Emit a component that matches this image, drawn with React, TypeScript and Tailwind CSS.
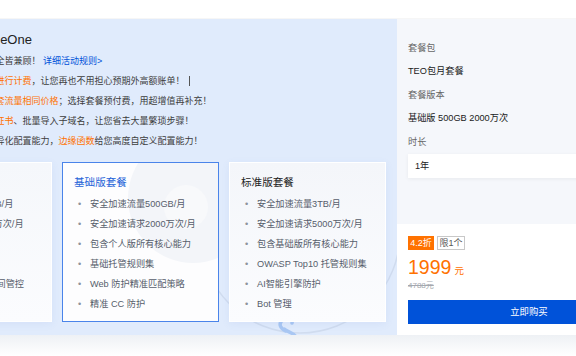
export default function App() {
  const card1 = [
    "安全加速流量50GB/月",
    "安全加速请求300万次/月",
    "包含基础安全能力",
    "免费 SSL 证书",
    "支持自定义访问时间管控",
  ];
  const card2 = [
    "安全加速流量500GB/月",
    "安全加速请求2000万次/月",
    "包含个人版所有核心能力",
    "基础托管规则集",
    "Web 防护精准匹配策略",
    "精准 CC 防护",
  ];
  const card3 = [
    "安全加速流量3TB/月",
    "安全加速请求5000万次/月",
    "包含基础版所有核心能力",
    "OWASP Top10 托管规则集",
    "AI智能引擎防护",
    "Bot 管理",
  ];

  const List = ({ items }: { items: string[] }) => (
    <ul className="mt-[5px] text-[9.2px] leading-[20px] text-[#565d6b] whitespace-nowrap">
      {items.map((t) => (
        <li key={t} className="flex">
          <span className="w-[16px] shrink-0 pl-[4px] text-[#8d929b]">•</span>
          <span>{t}</span>
        </li>
      ))}
    </ul>
  );

  return (
    <div className="w-[576px] h-[356px] overflow-hidden bg-white font-['Liberation_Sans','Noto_Sans_CJK_SC',sans-serif] text-[#333]">
      <div className="h-[19px] bg-white border-b border-[#f6f6f6]" />
      <div className="flex h-[316px]">
        {/* left promo panel */}
        <section className="relative w-[397px] shrink-0 overflow-hidden bg-[#e0ebfc]">
          <svg
            className="absolute left-[180px] top-[100px]"
            width="240"
            height="220"
            viewBox="0 0 240 220"
            fill="none"
          >
            <path d="M20 114 A100 100 0 0 0 220 114" stroke="#d0dcef" strokeWidth="1.5" />
            <path
              d="M106 212 c-6 -2 -8 -8 -3 -11 c5 -3 10 -1 9 3 M104 210 c4 3 10 4 12 8 c1 4 -4 7 -10 5"
              stroke="#a9c7f3"
              strokeWidth="3.5"
              strokeLinecap="round"
            />
          </svg>
          <div className="relative pt-[13px]">
            <h1 className="ml-[-23px] h-[16px] text-[13px] leading-[16px] text-[#222] whitespace-nowrap">
              EdgeOne
            </h1>
            <div className="mt-[3px] ml-[-4.5px] text-[9px] leading-[20px] text-[#3d3d3d] whitespace-nowrap">
              <p>
                全皆兼顾！ <a className="text-[#0052d9]">详细活动规则&gt;</a>
              </p>
              <p className="flex items-center">
                <span className="text-[#ff7200]">进行计费</span>
                <span>，让您再也不用担心预期外高额账单！</span>
                <span className="ml-[4.5px] inline-block h-[10px] w-px bg-[#555]" />
              </p>
              <p>
                <span className="text-[#ff7200]">套流量相同价格</span>；选择套餐预付费，用超增值再补充！
              </p>
              <p>
                <span className="text-[#ff7200]">证书</span>、批量导入子域名，让您省去大量繁琐步骤！
              </p>
              <p>
                异化配置能力，<span className="text-[#ff7200]">边缘函数</span>给您高度自定义配置能力！
              </p>
            </div>

            <div className="mt-[11px] ml-[-105px] flex gap-[10px]">
              <div className="w-[157px] h-[160px] shrink-0 border border-white bg-gradient-to-b from-[#f5f7fb] to-[#fbfcfe] pl-[11px] pt-[12px] shadow-[0_2px_8px_rgba(80,120,200,0.08)]">
                <h3 className="text-[10.6px] leading-[14px] text-[#222]">个人版套餐</h3>
                <List items={card1} />
              </div>
              <div className="relative w-[157px] h-[160px] shrink-0 overflow-hidden border border-[#4a84ea] bg-[#fdfdfe] pl-[11px] pt-[12px]">
                <div className="absolute right-[-40px] top-[-30px] h-[130px] w-[130px] rounded-full bg-[#f3f5f9]" />
                <div className="absolute right-[10px] top-[22px] h-[44px] w-[44px] rounded-full bg-[#f8f9fb]" />
                <div className="relative">
                  <h3 className="text-[10.6px] leading-[14px] text-[#2563d8]">基础版套餐</h3>
                  <List items={card2} />
                </div>
              </div>
              <div className="w-[157px] h-[160px] shrink-0 border border-white bg-gradient-to-b from-[#f4f6fa] to-[#fbfcfe] pl-[11px] pt-[12px] shadow-[0_2px_8px_rgba(80,120,200,0.08)]">
                <h3 className="text-[10.6px] leading-[14px] text-[#222]">标准版套餐</h3>
                <List items={card3} />
              </div>
            </div>
          </div>
        </section>

        {/* right order panel */}
        <aside className="flex min-w-0 flex-1 flex-col">
          <div className="h-[205px] shrink-0 bg-[#f5f7fb] pl-[11px] pt-[21.5px] text-[9.2px] leading-[14px] whitespace-nowrap">
            <div className="h-[14px] text-[#666]">套餐包</div>
            <div className="mt-[9.5px] h-[14px] text-[#1a1a1a]">TEO包月套餐</div>
            <div className="mt-[9.5px] h-[14px] text-[#666]">套餐版本</div>
            <div className="mt-[9.5px] h-[14px] text-[#1a1a1a]">基础版 500GB 2000万次</div>
            <div className="mt-[9.5px] h-[14px] text-[#666]">时长</div>
            <div className="mt-[5.5px] flex h-[24px] w-[242px] items-center bg-white pl-[7px] text-[#222] shadow-[0_1px_4px_rgba(0,0,0,0.06)]">
              1年
            </div>
          </div>
          <div className="flex-1 bg-white pl-[11px] pt-[11.7px] whitespace-nowrap">
            <div className="flex gap-[3px]">
              <span className="h-[14px] w-[26px] bg-[#ff7200] text-center text-[9px] leading-[14px] text-white">
                4.2折
              </span>
              <span className="h-[14px] w-[28px] border border-[#c8c8c8] text-center text-[9px] leading-[12px] text-[#555]">
                限1个
              </span>
            </div>
            <div className="mt-[7.8px] flex items-baseline text-[#ff7200]">
              <span className="text-[19.5px] leading-[20px]">1999</span>
              <span className="ml-[3px] text-[9.5px]">元</span>
            </div>
            <div className="mt-[2.5px] text-[8px] leading-[10px] text-[#a5a9b0] line-through">4788元</div>
            <button className="mt-[9px] flex h-[23.5px] w-[242px] items-center justify-center bg-[#0052d9] text-[9.4px] text-white">
              立即购买
            </button>
          </div>
        </aside>
      </div>
      <div className="h-[21px] bg-gradient-to-b from-[#eef1f5] to-white" />
    </div>
  );
}
